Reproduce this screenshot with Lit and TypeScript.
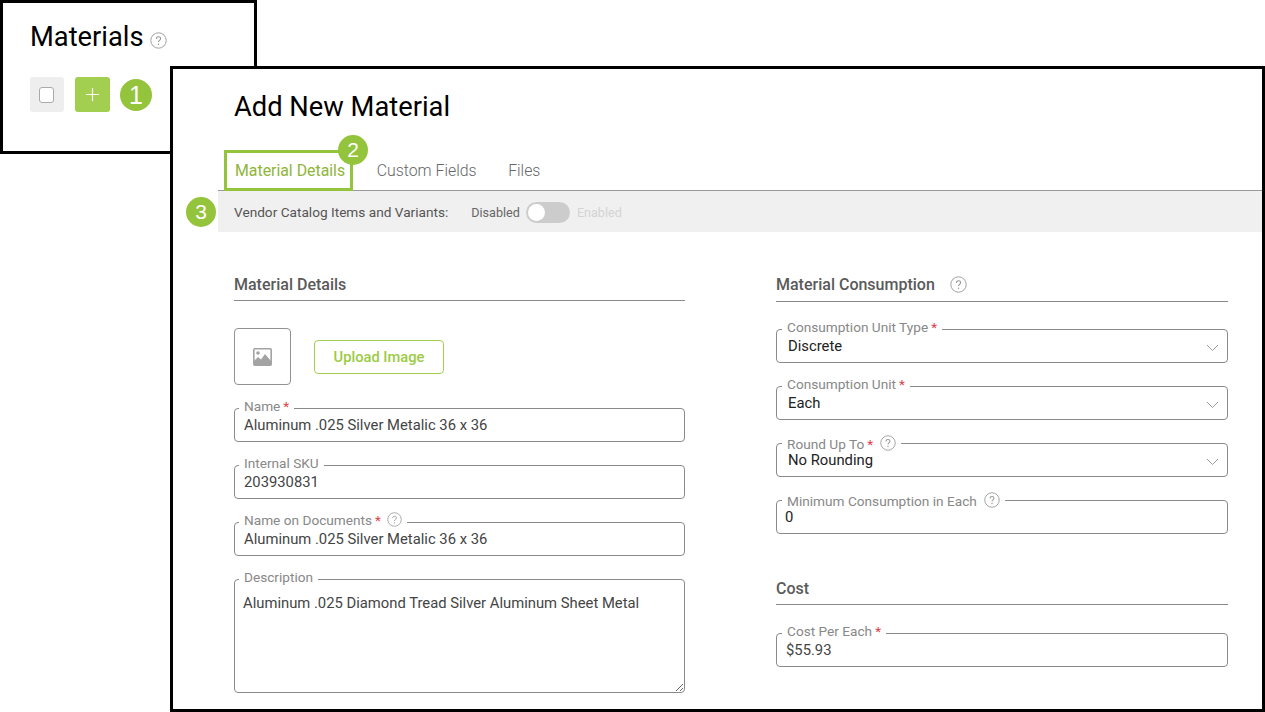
import { LitElement, html, css, svg } from "lit";
import { customElement } from "lit/decorators.js";

const help = (cls = "help") => html`<svg class=${cls} viewBox="0 0 17 17" fill="none" aria-hidden="true">
  <circle cx="8.5" cy="8.5" r="7.7" stroke="#a0a0a0" stroke-width="1"></circle>
  <path d="M6.4 6.9c0-1.3.9-2.1 2.1-2.1s2.1.8 2.1 1.9c0 1.7-2.1 1.7-2.1 3.4" stroke="#999" stroke-width="1.1"></path>
  <circle cx="8.5" cy="12.3" r=".75" fill="#999"></circle>
</svg>`;

const chevron = svg`<path d="M1 1l5.5 5.5L12 1" fill="none" stroke="#9a9a9a" stroke-width="1"></path>`;

@customElement("app-root")
export class AppRoot extends LitElement {
  static styles = css`
    :host {
      display: block;
      position: relative;
      width: 1265px;
      height: 712px;
      overflow: hidden;
      background: #fff;
      font-family: Roboto, "Liberation Sans", sans-serif;
      color: #444;
    }
    * { box-sizing: border-box; }
    .panel {
      position: absolute;
      background: #fff;
      border: 3px solid #000;
    }
    .small { left: 0; top: 0; width: 257px; height: 154px; padding: 18px 27px; }
    .big { left: 170px; top: 66px; width: 1095px; height: 646px; }
    .page-title { display: flex; align-items: center; gap: 6px; height: 32px; font-size: 27.3px; color: #000; line-height: 32px; }
    .page-title .help { width: 17px; height: 17px; margin-top: 7px; }
    .help { width: 17px; height: 17px; flex: none; }
    .actions { display: flex; gap: 11px; margin-top: 24px; }
    .act { width: 35px; height: 35px; border-radius: 3px; display: flex; align-items: center; justify-content: center; }
    .act.check { width: 34px; background: #eee; }
    .act.check span { width: 15px; height: 16px; margin-right: 2px; background: #fff; border: 1px solid #aaa; border-radius: 3px; }
    .act.add { background: #a2cf4f; color: #fff; }
    .act.add svg { width: 13px; height: 13px; }
    .badge {
      position: absolute;
      width: 30px; height: 30px;
      border-radius: 50%;
      background: #94c43c;
      color: #fff;
      font-family: "Liberation Sans", Arial, sans-serif;
      font-size: 21px;
      display: flex; align-items: center; justify-content: center;
      z-index: 3;
    }
    .b1 { left: 120px; top: 79px; width: 32px; height: 32px; font-size: 25px; }
    .b2 { left: 338px; top: 135px; }
    .b3 { left: 186px; top: 197px; }
    .inner { display: flex; flex-direction: column; height: 100%; padding-left: 45px; }
    .head { height: 81px; padding: 21px 0 0 16px; font-size: 27.3px; line-height: 34px; color: #000; }
    .tabs { display: flex; height: 41px; border-bottom: 1px solid #999; padding-left: 1px; font-size: 15.85px; color: #666; }
    .tab { position: relative; padding: 0 15.8px; line-height: 42px; font-weight: 300; }
    .tab.on { color: #8fb53a; font-weight: 400; padding-left: 16px; }
    .tab.on::after {
      content: "";
      position: absolute;
      left: 5px; right: 8px; top: 0; bottom: -1px;
      border: 3px solid #94c43c;
    }
    .vendor { display: flex; align-items: center; height: 41px; padding: 1px 0 0 16px; background: #f0f0f0; font-size: 13.65px; color: #555; }
    .state { font-size: 12.6px; color: #666; margin-left: 23px; }
    .state.off { color: #d4d4d4; margin-left: 7px; }
    .toggle { width: 44px; height: 21px; border-radius: 11px; background: #ccc; margin-left: 6px; padding: 2px; }
    .toggle span { display: block; width: 17px; height: 17px; border-radius: 50%; background: #fff; }
    .form { flex: 1; display: grid; grid-template-columns: 451px 452px; column-gap: 91px; padding: 40px 34px 0 16px; }
    .col { display: flex; flex-direction: column; }
    .h2 { display: flex; align-items: center; gap: 15px; height: 29px; border-bottom: 1px solid #8a8a8a; padding-bottom: 3px; font-size: 16px; font-weight: 500; color: #5a5a5a; }
    .h2.right { height: 30px; padding-bottom: 5px; }
    .h2.cost { margin-top: 42px; padding-bottom: 3px; }
    .upload { display: flex; align-items: center; gap: 23px; margin: 27px 0 23px; }
    .thumb { width: 57px; height: 57px; border: 1px solid #929292; border-radius: 4px; display: flex; align-items: center; justify-content: center; }
    .thumb svg { width: 19px; height: 18px; }
    .btn { width: 130px; height: 34px; padding-top: 1px; border: 1px solid #a2cf4f; border-radius: 4px; display: flex; align-items: center; justify-content: center; color: #9ccb45; font-size: 14.7px; font-weight: 500; }
    .fields { display: flex; flex-direction: column; gap: 23px; }
    .fields.r { margin-top: 27px; }
    .fields.c { margin-top: 28px; }
    .field { position: relative; height: 34px; border: 1px solid #8a8a8a; border-radius: 4px; padding: 7px 9px 0; font-size: 14.8px; line-height: 18px; color: #444; }
    .field.sel { color: #222; padding-left: 11px; }
    .field.num { padding-left: 8px; color: #222; }
    .field.cost { padding-left: 9px; }
    .lab { position: absolute; left: 4px; top: -12px; display: flex; align-items: center; gap: 4px; height: 18px; padding: 0 5px; background: #fff; font-size: 13.65px; line-height: 18px; color: #888; white-space: nowrap; }
    .lab.rt { left: 5px; }
    .lab.low { top: -9px; }
    .lab.low .help { width: 16px; height: 16px; margin: -2px 0 0 3px; }
    .lab i { font-style: normal; color: #e0404a; margin-left: -1px; }
    .lab .help { width: 15px; height: 15px; margin: -1px 0 0 2px; }
    .chev { position: absolute; right: 8px; top: 14px; width: 13px; height: 8px; }
    .desc { position: relative; display: block; }
    .desc .lab { left: 5px; top: -11px; }
    textarea {
      display: block;
      width: 451px; height: 114px;
      border: 1px solid #8a8a8a; border-radius: 4px;
      padding: 14px 8px 0;
      font: 14.8px/18px Roboto, "Liberation Sans", sans-serif;
      color: #444;
      resize: both;
      outline: none;
      background: #fff;
    }
  `;

  field(label: string, value: string, opts: { req?: boolean; help?: boolean; cls?: string; sel?: boolean; rt?: boolean } = {}) {
    const labCls = `lab ${opts.rt ? "rt" : ""} ${opts.rt && opts.help ? "low" : ""}`;
    return html`<div class="field ${opts.cls ?? ""} ${opts.sel ? "sel" : ""}">
      <span class=${labCls}>${label}${opts.req ? html`<i>*</i>` : ""}${opts.help ? help() : ""}</span>
      ${value}
      ${opts.sel ? html`<svg class="chev" viewBox="0 0 13 8">${chevron}</svg>` : ""}
    </div>`;
  }

  render() {
    return html`
      <section class="panel small">
        <div class="page-title">Materials ${help()}</div>
        <div class="actions">
          <div class="act check"><span></span></div>
          <div class="act add"><svg viewBox="0 0 13 13"><path d="M6.5 0v13M0 6.5h13" stroke="#fff" stroke-width="1.2"></path></svg></div>
        </div>
      </section>
      <div class="badge b1">1</div>
      <section class="panel big">
        <div class="inner">
          <div class="head">Add New Material</div>
          <nav class="tabs">
            <div class="tab on">Material Details</div>
            <div class="tab">Custom Fields</div>
            <div class="tab">Files</div>
          </nav>
          <div class="vendor">
            Vendor Catalog Items and Variants:
            <span class="state">Disabled</span>
            <div class="toggle"><span></span></div>
            <span class="state off">Enabled</span>
          </div>
          <div class="form">
            <div class="col">
              <div class="h2">Material Details</div>
              <div class="upload">
                <div class="thumb">
                  <svg viewBox="0 0 19 18"><rect x=".8" y=".8" width="17.4" height="16.4" rx="1" fill="#fff" stroke="#a3a3a3" stroke-width="1.6"></rect><circle cx="5" cy="5" r="1.8" fill="#a3a3a3"></circle><path d="M1 17v-4l4-4 3 2.5L12 6l6 7v4z" fill="#a3a3a3"></path></svg>
                </div>
                <div class="btn">Upload Image</div>
              </div>
              <div class="fields">
                ${this.field("Name", "Aluminum .025 Silver Metalic 36 x 36", { req: true })}
                ${this.field("Internal SKU", "203930831")}
                ${this.field("Name on Documents", "Aluminum .025 Silver Metalic 36 x 36", { req: true, help: true })}
                <div class="desc">
                  <span class="lab">Description</span>
                  <textarea readonly>Aluminum .025 Diamond Tread Silver Aluminum Sheet Metal</textarea>
                </div>
              </div>
            </div>
            <div class="col">
              <div class="h2 right">Material Consumption ${help()}</div>
              <div class="fields r">
                ${this.field("Consumption Unit Type", "Discrete", { req: true, sel: true, rt: true })}
                ${this.field("Consumption Unit", "Each", { req: true, sel: true, rt: true })}
                ${this.field("Round Up To", "No Rounding", { req: true, help: true, sel: true, rt: true })}
                ${this.field("Minimum Consumption in Each", "0", { help: true, cls: "num", rt: true })}
              </div>
              <div class="h2 cost">Cost</div>
              <div class="fields c">
                ${this.field("Cost Per Each", "$55.93", { req: true, cls: "cost", rt: true })}
              </div>
            </div>
          </div>
        </div>
      </section>
      <div class="badge b2">2</div>
      <div class="badge b3">3</div>
    `;
  }
}
